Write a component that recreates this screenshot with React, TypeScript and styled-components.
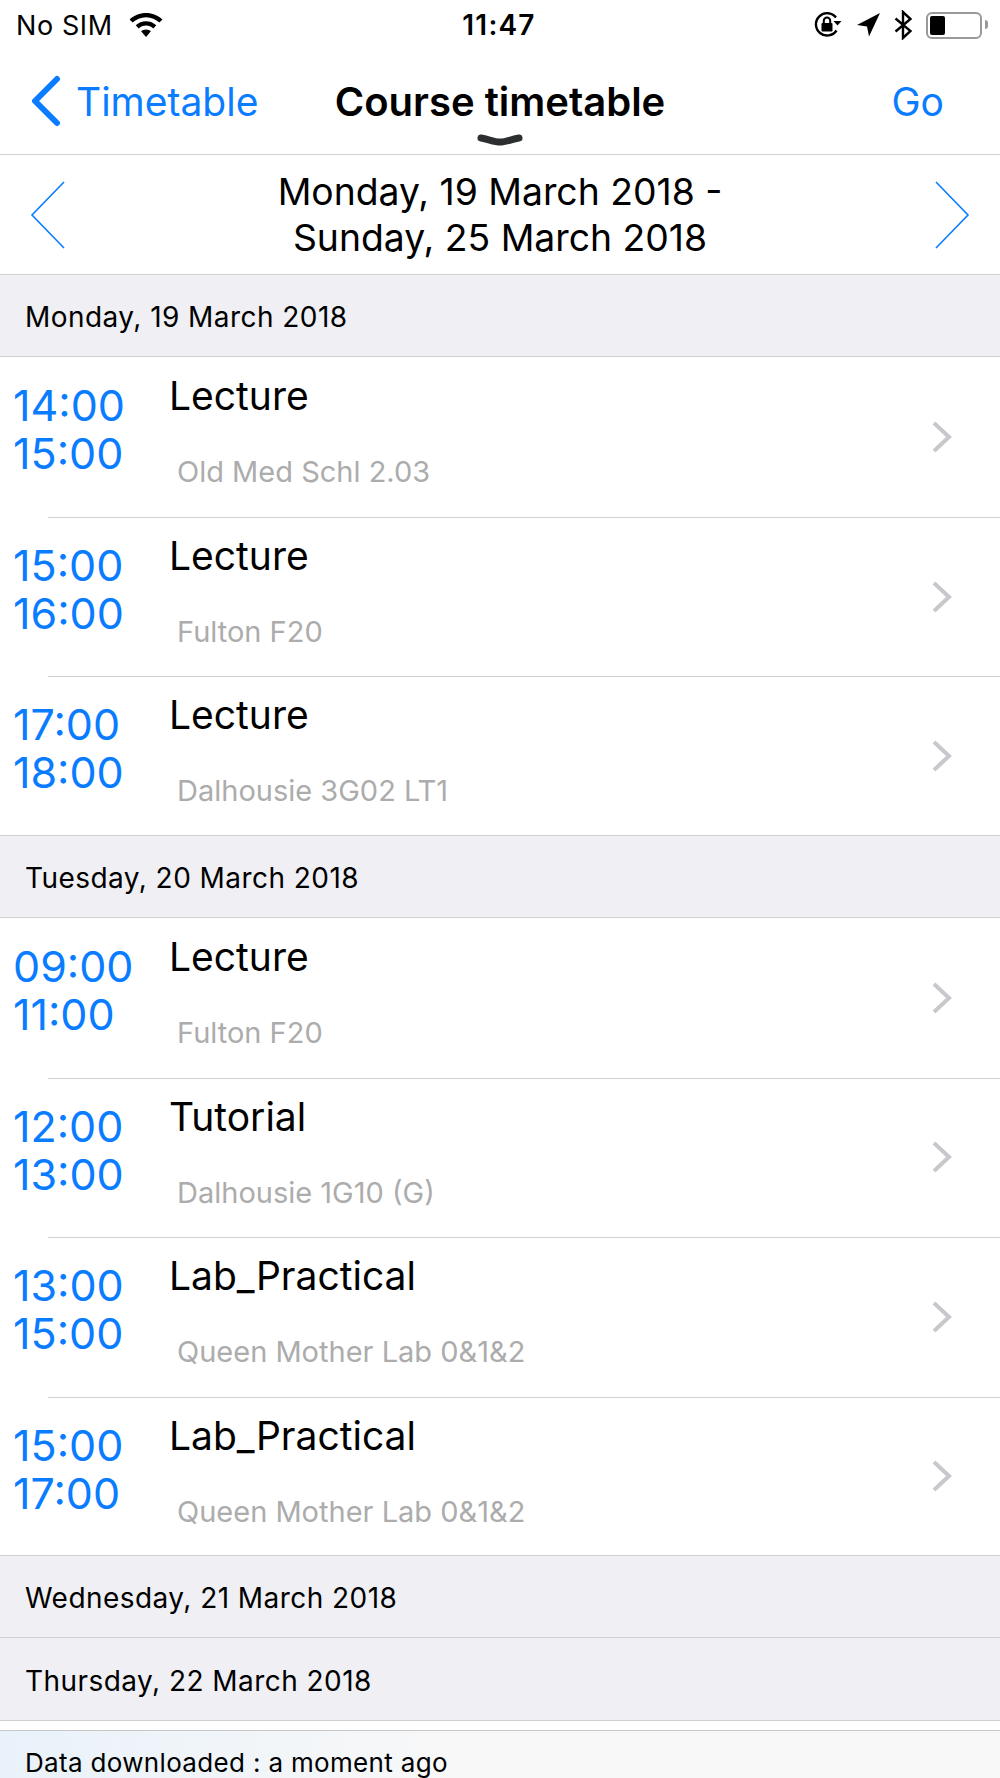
import React from 'react';
import styled, {createGlobalStyle} from "styled-components";

const blue = "#0a7cff";
const line = "#d0d0d3";

const GlobalStyle = createGlobalStyle`
  html, body {
    margin: 0;
    padding: 0;
    background: #fff;
  }
  body {
    font-family: Inter, "Liberation Sans", sans-serif;
    color: #000;
  }
`

type Lesson = { from: string, to: string, title: string, room: string }
type Day = { date: string, lessons: Lesson[] }

const days: Day[] = [
    {
        date: "Monday, 19 March 2018",
        lessons: [
            {from: "14:00", to: "15:00", title: "Lecture", room: "Old Med Schl 2.03"},
            {from: "15:00", to: "16:00", title: "Lecture", room: "Fulton F20"},
            {from: "17:00", to: "18:00", title: "Lecture", room: "Dalhousie 3G02 LT1"},
        ],
    },
    {
        date: "Tuesday, 20 March 2018",
        lessons: [
            {from: "09:00", to: "11:00", title: "Lecture", room: "Fulton F20"},
            {from: "12:00", to: "13:00", title: "Tutorial", room: "Dalhousie 1G10 (G)"},
            {from: "13:00", to: "15:00", title: "Lab_Practical", room: "Queen Mother Lab 0&1&2"},
            {from: "15:00", to: "17:00", title: "Lab_Practical", room: "Queen Mother Lab 0&1&2"},
        ],
    },
    {date: "Wednesday, 21 March 2018", lessons: []},
    {date: "Thursday, 22 March 2018", lessons: []},
];

const Wifi = () => (
    <svg width="34" height="25" viewBox="0 0 34 25">
        <path fill="#000" d="M17 0C10.6 0 4.9 2.5.6 6.5l3 3.1C7.1 6.3 11.8 4.2 17 4.2s9.900 2.100 13.400 5.400l3-3.100C29.100 2.500 23.400 0 17 0z"/>
        <path fill="#000" d="M17 8.200c-4 0-7.600 1.600-10.300 4.100l3 3.100c1.900-1.700 4.500-2.900 7.300-2.900s5.400 1.200 7.300 2.900l3-3.100C24.600 9.800 21 8.200 17 8.200z"/>
        <path fill="#000" d="M17 16.400c-1.900 0-3.600.7-4.900 1.900L17 24l4.900-5.700c-1.300-1.200-3-1.900-4.900-1.900z"/>
    </svg>
);

const RotationLock = () => (
    <svg width="28" height="28" viewBox="0 0 28 28">
        <path fill="none" stroke="#000" strokeWidth="2.400" d="M22.500 19.500A11.200 11.200 0 1 1 22 6.500"/>
        <path fill="#000" d="M19.500 10h8l-4 4.500z"/>
        <rect x="7.500" y="12" width="11" height="8.500" rx="1" fill="#000"/>
        <path fill="none" stroke="#000" strokeWidth="2" d="M9.800 12V9.800a3.200 3.200 0 0 1 6.400 0V12"/>
    </svg>
);

const LocationArrow = () => (
    <svg width="24" height="24" viewBox="0 0 24 24">
        <path fill="#000" d="M24 0L1 12l10 1.500L13 23.500z"/>
    </svg>
);

const Bluetooth = () => (
    <svg width="18" height="30" viewBox="0 0 18 30">
        <path fill="none" stroke="#000" strokeWidth="2.400" d="M1.500 8.500l15 12.500L9 28V2l7.500 7L1.500 21.500"/>
    </svg>
);

const NavBack = () => (
    <svg width="32" height="52" viewBox="0 0 32 52">
        <path fill="none" stroke={blue} strokeWidth="6" strokeLinecap="round" strokeLinejoin="round" d="M27 4L5 26l22 22"/>
    </svg>
);

const Arrow = ({flip}: { flip?: boolean }) => (
    <svg width="36" height="70" viewBox="0 0 36 70">
        <path fill="none" stroke={blue} strokeWidth="1.600" d={flip ? "M2 2l32 33L2 68" : "M34 2L2 35l32 33"}/>
    </svg>
);

const RowChevron = () => (
    <svg width="20" height="32" viewBox="0 0 20 32">
        <path fill="none" stroke="#c8c8cc" strokeWidth="4" strokeLinejoin="miter" d="M2 2l15 14L2 30"/>
    </svg>
);

const Handle = () => (
    <svg width="46" height="13" viewBox="0 0 46 13">
        <path fill="none" stroke="#2b2f2f" strokeWidth="7" strokeLinecap="round" d="M4 4c7 1 13 4 19 4s12-3 19-4"/>
    </svg>
);

export default function App() {
    return (
        <Page>
            <GlobalStyle/>
            <StatusBar>
                <StatusSide>
                    <StatusText>No SIM</StatusText>
                    <Wifi/>
                </StatusSide>
                <Clock>11:47</Clock>
                <StatusRight>
                    <RotationLock/>
                    <LocationArrow/>
                    <Bluetooth/>
                    <Battery>
                        <BatteryLevel/>
                    </Battery>
                </StatusRight>
            </StatusBar>
            <NavBar>
                <BackLink>
                    <NavBack/>
                    <span>Timetable</span>
                </BackLink>
                <NavTitle>Course timetable</NavTitle>
                <GoLink>Go</GoLink>
                <HandleSlot><Handle/></HandleSlot>
            </NavBar>
            <WeekBar>
                <Arrow/>
                <WeekText>Monday, 19 March 2018 -<br/>Sunday, 25 March 2018</WeekText>
                <Arrow flip/>
            </WeekBar>
            {days.map(day => (
                <section key={day.date}>
                    <DayHeader>{day.date}</DayHeader>
                    {day.lessons.map((lesson, i) => (
                        <Row key={i} $first={i === 0}>
                            <Times>
                                <TimeLine>{lesson.from}</TimeLine>
                                <TimeLine>{lesson.to}</TimeLine>
                            </Times>
                            <Info>
                                <Title>{lesson.title}</Title>
                                <Room>{lesson.room}</Room>
                            </Info>
                            <RowChevron/>
                        </Row>
                    ))}
                </section>
            ))}
            <Footer>Data downloaded : a moment ago</Footer>
        </Page>
    );
}

const Page = styled.div`
  width: 1000px;
  height: 1778px;
  overflow: hidden;
  background: #fff;
`

const StatusBar = styled.div`
  height: 50px;
  padding: 0 18px 0 16px;
  display: grid;
  grid-template-columns: 1fr auto 1fr;
  align-items: center;
`

const StatusSide = styled.div`
  display: flex;
  align-items: center;
  gap: 16px;
`

const StatusRight = styled(StatusSide)`
  justify-content: flex-end;
  gap: 14px;
`

const StatusText = styled.span`
  font-size: 27px;
  letter-spacing: .6px;
`

const Clock = styled.span`
  font-size: 28px;
  font-weight: 600;
  letter-spacing: 1.200px;
`

const Battery = styled.div`
  width: 56px;
  height: 27px;
  box-sizing: border-box;
  border: 2px solid #999;
  border-radius: 6px;
  padding: 2px;
  position: relative;
  &::after {
    content: "";
    position: absolute;
    right: -8px;
    top: 6px;
    width: 3px;
    height: 9px;
    background: #999;
    border-radius: 0 3px 3px 0;
  }
`

const BatteryLevel = styled.div`
  width: 15px;
  height: 100%;
  background: #000;
  border-radius: 2px;
`

const NavBar = styled.div`
  height: 79px;
  padding: 25px 30px 0;
  border-bottom: 1px solid ${line};
  display: grid;
  grid-template-columns: 1fr auto 1fr;
  grid-template-rows: 52px auto;
  align-items: center;
`

const BackLink = styled.div`
  display: flex;
  align-items: center;
  gap: 14px;
  color: ${blue};
  font-size: 39px;
`

const NavTitle = styled.div`
  font-size: 40px;
  font-weight: 600;
`

const GoLink = styled.div`
  justify-self: end;
  margin-right: 26px;
  color: ${blue};
  font-size: 39px;
`

const HandleSlot = styled.div`
  grid-column: 1 / -1;
  justify-self: center;
  display: flex;
`

const WeekBar = styled.div`
  height: 119px;
  padding: 0 30px;
  border-bottom: 1px solid ${line};
  display: flex;
  align-items: center;
  justify-content: space-between;
`

const WeekText = styled.div`
  font-size: 37.300px;
  line-height: 46px;
  text-align: center;
`

const DayHeader = styled.div`
  box-sizing: border-box;
  height: 82.300px;
  padding: 3px 0 0 25px;
  background: #efeff4;
  border-bottom: 1px solid ${line};
  box-shadow: 0 -1px 0 ${line};
  display: flex;
  align-items: center;
  font-size: 28px;
  letter-spacing: .45px;
`

const Row = styled.div<{ $first: boolean }>`
  height: 159.500px;
  padding-right: 48px;
  display: grid;
  grid-template-columns: 169px 1fr auto;
  align-items: center;
  position: relative;
  &::before {
    content: ${props => props.$first ? "none" : `""`};
    position: absolute;
    left: 48px;
    right: 0;
    top: 0;
    height: 1px;
    background: ${line};
  }
`

const Times = styled.div`
  align-self: start;
  padding: 24px 0 0 13px;
  color: ${blue};
  font-size: 43px;
`

const TimeLine = styled.div`
  line-height: 48px;
`

const Info = styled.div`
  display: flex;
  flex-direction: column;
  align-self: start;
  padding-top: 16px;
`

const Title = styled.div`
  font-size: 39px;
  line-height: 46px;
`

const Room = styled.div`
  margin: 36px 0 0 8px;
  color: #acacac;
  font-size: 29px;
  line-height: 34px;
`

const Footer = styled.div`
  box-sizing: border-box;
  margin-top: 9px;
  height: 49px;
  padding: 12px 0 0 25px;
  border-top: 1px solid #c8c8c8;
  background: linear-gradient(90deg, #e9f2fa, #f8f8f8 45%, #f8f8f8);
  font-size: 26px;
  letter-spacing: .33px;
  line-height: 40px;
`
